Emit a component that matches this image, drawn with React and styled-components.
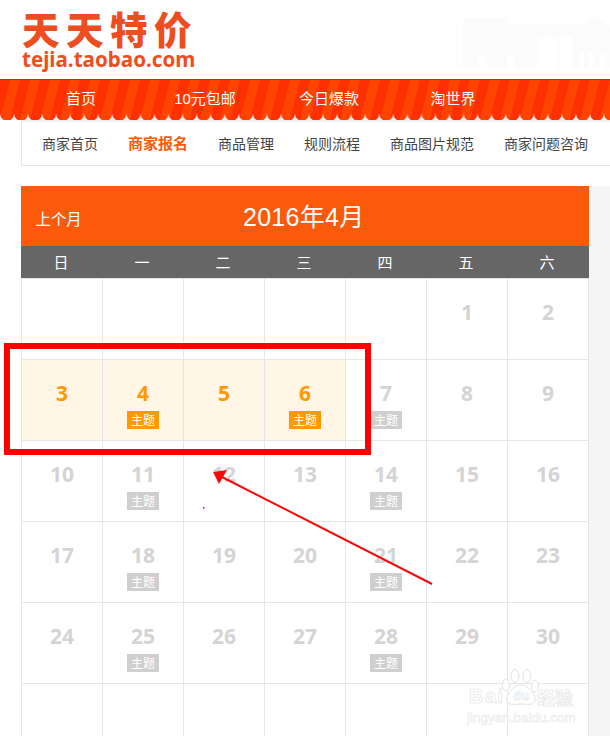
import React from "react";
import styled, { createGlobalStyle } from "styled-components";

const Global = createGlobalStyle`
  html, body { margin: 0; padding: 0; background: #fff; }
  body { font-family: "Liberation Sans", "Noto Sans CJK SC", sans-serif; }
  #root { height: 736px; overflow: hidden; }
`;

const Page = styled.div`
  position: relative;
  width: 610px;
  height: 736px;
  overflow: hidden;
`;

const Header = styled.header`
  height: 79px;
  padding-left: 22px;
  display: flex;
  justify-content: space-between;
  box-sizing: border-box;
`;

const Logo = styled.div`
  padding-top: 9px;
  color: #ee4e1f;
`;

const LogoTitle = styled.div`
  font: 900 37.5px/38px "Noto Sans CJK SC", sans-serif;
  letter-spacing: 6.5px;
  white-space: nowrap;
`;

const LogoUrl = styled.div`
  margin-top: 2px;
  font: 700 20.6px/20px "Noto Sans", sans-serif;
  white-space: nowrap;
`;

const Skyline = styled.svg`
  width: 180px;
  height: 51px;
  margin-top: 17px;
  flex: none;
`;

const Nav = styled.nav`
  position: relative;
  height: 41px;
  box-sizing: border-box;
  border-top: 1px solid #c92c00;
  padding-left: 19px;
  display: flex;
  align-items: center;
  padding-bottom: 2px;
  background: repeating-linear-gradient(104deg, #fc3000 0 9.7px, #ff4300 9.7px 19.4px);
  &::after {
    content: "";
    position: absolute;
    left: 0;
    right: 0;
    bottom: 0;
    height: 6px;
    background: radial-gradient(circle at 7px 0, transparent 6.4px, #ececec 7.2px) 0 0 / 14.05px 6px repeat-x;
  }
`;

const NavItem = styled.a`
  width: 124px;
  text-align: center;
  color: #fff;
  font: 15px/20px "Liberation Sans", "Noto Sans CJK SC", sans-serif;
`;

const SubNav = styled.div`
  margin-left: 21px;
  height: 46px;
  box-sizing: border-box;
  border-left: 1px solid #e5e5e5;
  border-bottom: 1px solid #e5e5e5;
  padding-left: 20px;
  display: flex;
  align-items: center;
  gap: 30px;
  background: linear-gradient(#e8e8e8 0, #fff 3px);
`;

const SubItem = styled.a`
  color: ${(p) => (p.$active ? "#f95a0b" : "#444")};
  font: ${(p) => (p.$active ? "700 15px" : "400 14px")}/20px "Noto Sans CJK SC", sans-serif;
  white-space: nowrap;
`;

const Main = styled.main`
  margin: 20px 0 0 21px;
  display: flex;
`;

const Calendar = styled.section`
  width: 568px;
  flex: none;
`;

const Side = styled.aside`
  flex: 1;
  height: 560px;
  background: #f5f5f5;
`;

const TitleBar = styled.div`
  height: 60px;
  background: #fa5a0a;
  color: #fff;
  display: grid;
  grid-template-columns: 1fr auto 1fr;
  align-items: center;
  padding: 0 15px 0 14.5px;
  box-sizing: border-box;
`;

const Prev = styled.span`
  font: 15.4px/20px "Noto Sans CJK SC", sans-serif;
  position: relative;
  top: 2px;
`;

const Month = styled.span`
  font: 25px/32px "Liberation Sans", "Noto Sans CJK SC", sans-serif;
  letter-spacing: 0.3px;
  padding: 2px 2px 0 0;
`;

const Week = styled.div`
  height: 32px;
  background: #666;
  display: grid;
  grid-template-columns: repeat(7, 81px);
  align-items: center;
  color: #fff;
  font: 15px/20px "Noto Sans CJK SC", sans-serif;
`;

const WeekDay = styled.span`
  text-align: center;
  padding-right: 1px;
`;

const Grid = styled.div`
  display: grid;
  grid-template-columns: repeat(7, 81px);
  grid-auto-rows: 81px;
  width: 568px;
  box-sizing: border-box;
  border-top: 1px solid #e6e6e6;
  border-right: 1px solid #e6e6e6;
`;

const Cell = styled.div`
  box-sizing: border-box;
  border-left: 1px solid #e6e6e6;
  border-bottom: 1px solid #e6e6e6;
  background: ${(p) => (p.$on ? "#fff6e6" : "#fff")};
  padding-top: 21px;
  display: flex;
  flex-direction: column;
  align-items: center;
`;

const Day = styled.div`
  font: 700 21px/24px "Noto Sans", sans-serif;
  color: ${(p) => (p.$on ? "#ff9900" : "#d4d4d4")};
`;

const Tag = styled.div`
  margin-top: 6px;
  width: 32px;
  height: 18px;
  background: ${(p) => (p.$on ? "#ff9900" : "#cfcfcf")};
  color: #fff;
  font: 12px/18px "Noto Sans CJK SC", sans-serif;
  text-align: center;
`;

const RedBox = styled.div`
  position: absolute;
  left: 4px;
  top: 343px;
  width: 367px;
  height: 112px;
  box-sizing: border-box;
  border: 6px solid #ff0000;
`;

const Annotation = styled.svg`
  position: absolute;
  left: 0;
  top: 0;
  width: 610px;
  height: 736px;
  pointer-events: none;
`;

const Watermark = styled.div`
  position: absolute;
  left: 465px;
  top: 668px;
  width: 115px;
  height: 60px;
`;

const WmBai = styled.span`
  position: absolute;
  left: 4px;
  top: 16px;
  font: 700 20px/24px "Liberation Sans", sans-serif;
  letter-spacing: 1.5px;
  color: #fff;
  -webkit-text-stroke: 0.6px #e2e2e2;
`;

const WmCn = styled.span`
  position: absolute;
  left: 72px;
  top: 17px;
  font: 700 18px/24px "Noto Sans CJK SC", sans-serif;
  color: #fff;
  -webkit-text-stroke: 0.6px #e2e2e2;
  white-space: nowrap;
`;

const WmUrl = styled.span`
  position: absolute;
  left: 2px;
  top: 42px;
  font: 13.5px/16px "Liberation Sans", sans-serif;
  color: #fff;
  -webkit-text-stroke: 0.5px #e6e6e6;
  white-space: nowrap;
`;

const WmPaw = styled.svg`
  position: absolute;
  left: 36px;
  top: 0;
  width: 40px;
  height: 42px;
`;

const navItems = ["首页", "10元包邮", "今日爆款", "淘世界"];
const subItems = ["商家首页", "商家报名", "商品管理", "规则流程", "商品图片规范", "商家问题咨询"];
const weekDays = ["日", "一", "二", "三", "四", "五", "六"];
const tagged = [4, 6, 7, 11, 14, 18, 21, 25, 28];
const active = [3, 4, 5, 6];
const cells = [...Array(5).fill(0), ...Array.from({ length: 30 }, (_, i) => i + 1), ...Array(7).fill(0)];

export default function App() {
  return (
    <Page>
      <Global />
      <Header>
        <Logo>
          <LogoTitle>天天特价</LogoTitle>
          <LogoUrl>tejia.taobao.com</LogoUrl>
        </Logo>
        <Skyline viewBox="0 0 180 51">
          <path d="M33 1H77V7H145L153 6L160 0H168L172 5L180 8V51H33Z" fill="#fbfbfb" />
          <path d="M0 3H33V51H0Z" fill="#fefefe" />
          <g fill="#fff">
            <rect x="107" y="20" width="21" height="31" />
            <rect x="130" y="20" width="12" height="31" />
            <rect x="49" y="38" width="8" height="13" />
            <rect x="77" y="38" width="7" height="13" />
            <rect x="150" y="36" width="4" height="15" />
            <rect x="159" y="36" width="4" height="15" />
            <rect x="170" y="36" width="6" height="15" />
          </g>
        </Skyline>
      </Header>
      <Nav>
        {navItems.map((t) => (
          <NavItem key={t}>{t}</NavItem>
        ))}
      </Nav>
      <SubNav>
        {subItems.map((t) => (
          <SubItem key={t} $active={t === "商家报名"}>{t}</SubItem>
        ))}
      </SubNav>
      <Main>
        <Calendar>
          <TitleBar>
            <Prev>上个月</Prev>
            <Month>2016年4月</Month>
          </TitleBar>
          <Week>
            {weekDays.map((d) => (
              <WeekDay key={d}>{d}</WeekDay>
            ))}
          </Week>
          <Grid>
            {cells.map((d, i) => {
              const on = active.includes(d);
              return (
                <Cell key={i} $on={on}>
                  {d > 0 && <Day $on={on}>{d}</Day>}
                  {tagged.includes(d) && <Tag $on={on}>主题</Tag>}
                </Cell>
              );
            })}
          </Grid>
        </Calendar>
        <Side />
      </Main>
      <RedBox />
      <Annotation viewBox="0 0 610 736">
        <line x1="432" y1="584" x2="222" y2="477" stroke="#f80808" strokeWidth="2" />
        <path d="M213 472L227 470L219 484Z" fill="#f80808" />
        <rect x="203" y="507" width="1.5" height="1.5" fill="#c02020" />
      </Annotation>
      <Watermark>
        <WmBai>Bai</WmBai>
        <WmPaw viewBox="0 0 40 42">
          <g fill="#fff" stroke="#e2e2e2" strokeWidth="1">
            <ellipse cx="5" cy="17" rx="3.5" ry="6" />
            <ellipse cx="14" cy="8" rx="4" ry="6.5" />
            <ellipse cx="26" cy="8" rx="4" ry="6.5" />
            <ellipse cx="34" cy="18" rx="3.5" ry="6" />
            <path d="M20 17C27 17 36 27 34 33C32 38 25 36 20 36C15 36 8 38 6 33C4 27 13 17 20 17Z" />
          </g>
          <text x="20" y="32" textAnchor="middle" fontFamily="Liberation Sans" fontWeight="700" fontSize="13" fill="#fff" stroke="#dedede" strokeWidth="0.5">du</text>
        </WmPaw>
        <WmCn>经验</WmCn>
        <WmUrl>jingyan.baidu.com</WmUrl>
      </Watermark>
    </Page>
  );
}
